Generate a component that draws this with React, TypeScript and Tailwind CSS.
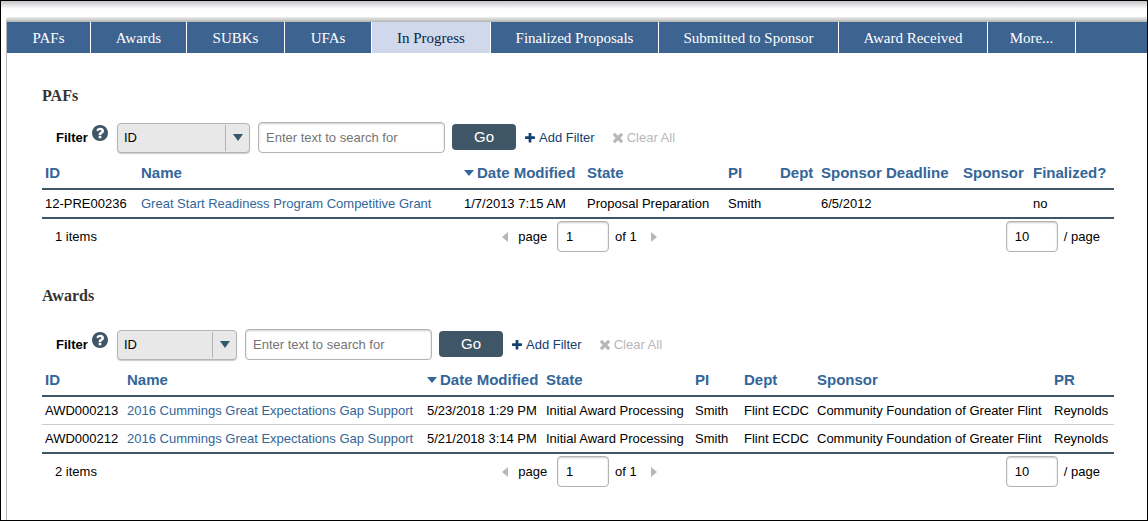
import React from 'react';

const TABS = [
  { label: 'PAFs', width: 'w-[84px]' },
  { label: 'Awards', width: 'w-[96px]' },
  { label: 'SUBKs', width: 'w-[98px]' },
  { label: 'UFAs', width: 'w-[87px]' },
  { label: 'In Progress', width: 'w-[119px]', active: true },
  { label: 'Finalized Proposals', width: 'w-[168px]' },
  { label: 'Submitted to Sponsor', width: 'w-[180px]' },
  { label: 'Award Received', width: 'w-[149px]' },
  { label: 'More...', width: 'w-[88px]' },
];

type Column = { label: string; width: string; sorted?: boolean; link?: boolean };

const PAF_COLUMNS: Column[] = [
  { label: 'ID', width: 'w-[96px]' },
  { label: 'Name', width: 'w-[323px]', link: true },
  { label: 'Date Modified', width: 'w-[123px]', sorted: true },
  { label: 'State', width: 'w-[141px]' },
  { label: 'PI', width: 'w-[52px]' },
  { label: 'Dept', width: 'w-[41px]' },
  { label: 'Sponsor Deadline', width: 'w-[142px]' },
  { label: 'Sponsor', width: 'w-[70px]' },
  { label: 'Finalized?', width: 'w-[84px]' },
];

const PAF_ROWS = [
  [
    '12-PRE00236',
    'Great Start Readiness Program Competitive Grant',
    '1/7/2013 7:15 AM',
    'Proposal Preparation',
    'Smith',
    '',
    '6/5/2012',
    '',
    'no',
  ],
];

const AWARD_COLUMNS: Column[] = [
  { label: 'ID', width: 'w-[82px]' },
  { label: 'Name', width: 'w-[300px]', link: true },
  { label: 'Date Modified', width: 'w-[119px]', sorted: true },
  { label: 'State', width: 'w-[149px]' },
  { label: 'PI', width: 'w-[49px]' },
  { label: 'Dept', width: 'w-[73px]' },
  { label: 'Sponsor', width: 'w-[237px]' },
  { label: 'PR', width: 'w-[63px]' },
];

const AWARD_ROWS = [
  [
    'AWD000213',
    '2016 Cummings Great Expectations Gap Support',
    '5/23/2018 1:29 PM',
    'Initial Award Processing',
    'Smith',
    'Flint ECDC',
    'Community Foundation of Greater Flint',
    'Reynolds',
  ],
  [
    'AWD000212',
    '2016 Cummings Great Expectations Gap Support',
    '5/21/2018 3:14 PM',
    'Initial Award Processing',
    'Smith',
    'Flint ECDC',
    'Community Foundation of Greater Flint',
    'Reynolds',
  ],
];

function QuestionIcon() {
  return (
    <svg viewBox="128 128 1536 1536" className="size-4 fill-[#3f5666]" aria-hidden="true">
      <path d="M1024 1376v-192q0-14-9-23t-23-9h-192q-14 0-23 9t-9 23v192q0 14 9 23t23 9h192q14 0 23-9t9-23zm256-672q0-88-55.5-163t-138.5-116-170-41q-243 0-371 213-15 24 8 42l132 100q7 6 19 6 16 0 25-12 53-68 86-92 34-24 86-24 48 0 85.5 26t37.5 59q0 38-20 61t-68 45q-63 28-115.5 86.5t-52.5 125.5v36q0 14 9 23t23 9h192q14 0 23-9t9-23q0-19 21.5-49.5t54.5-49.5q32-18 49-28.5t46-35 44.5-48 28-60.5 12.5-81zm384 192q0 209-103 385.5t-279.5 279.5-385.5 103-385.5-103-279.5-279.5-103-385.5 103-385.5 279.5-279.5 385.5-103 385.5 103 279.5 279.5 103 385.5z" />
    </svg>
  );
}

function PlusIcon() {
  return (
    <svg viewBox="192 192 1408 1408" className="size-[10px] fill-current" aria-hidden="true">
      <path d="M1600 736v192q0 40-28 68t-68 28h-416v416q0 40-28 68t-68 28h-192q-40 0-68-28t-28-68v-416h-416q-40 0-68-28t-28-68v-192q0-40 28-68t68-28h416v-416q0-40 28-68t68-28h192q40 0 68 28t28 68v416h416q40 0 68 28t28 68z" />
    </svg>
  );
}

function TimesIcon() {
  return (
    <svg viewBox="302 366 1188 1188" className="size-[10px] fill-current" aria-hidden="true">
      <path d="M1490 1322q0 40-28 68l-136 136q-28 28-68 28t-68-28l-294-294-294 294q-28 28-68 28t-68-28l-136-136q-28-28-28-68t28-68l294-294-294-294q-28-28-28-68t28-68l136-136q28-28 68-28t68 28l294 294 294-294q28-28 68-28t68 28l136 136q28 28 28 68t-28 68l-294 294 294 294q28 28 28 68z" />
    </svg>
  );
}

function FilterBar({ id, selectWidth }: { id: string; selectWidth: string }) {
  return (
    <form className="flex h-[31px] items-center pl-[14px]" onSubmit={(e) => e.preventDefault()}>
      <label htmlFor={`${id}-field`} className="w-9 font-bold">
        Filter
      </label>
      <button type="button" aria-label="Filter help" className="mr-[9px] mb-[10px]">
        <QuestionIcon />
      </button>
      <div className={`relative mr-2 ${selectWidth}`}>
        <select
          id={`${id}-field`}
          className="block h-[30px] w-full appearance-none rounded-[4px] border border-[#b4b4b4] bg-[#e8e8e8] pl-[6px] shadow-[0_1px_1px_rgba(0,0,0,0.2)]"
        >
          <option>ID</option>
          <option>Name</option>
          <option>State</option>
        </select>
        <span className="pointer-events-none absolute inset-y-[2px] right-[1px] flex w-6 items-center justify-center border-l border-[#b4b4b4]">
          <svg viewBox="0 0 10 7" className="h-[7px] w-[10px] fill-[#33586c]" aria-hidden="true">
            <path d="M0 0h10L5 7z" />
          </svg>
        </span>
      </div>
      <input
        type="text"
        aria-label="Search text"
        placeholder="Enter text to search for"
        className="h-[31px] w-[187px] rounded-[4px] border border-[#b4b4b4] bg-white px-[7px] shadow-[inset_0_1px_2px_rgba(0,0,0,0.2)] placeholder:text-[#757575]"
      />
      <button type="submit" className="mr-[9px] mb-px ml-[7px] h-[26px] w-16 rounded-[4px] bg-[#3f5666] text-[15px] text-white">
        Go
      </button>
      <button type="button" className="mr-[18px] flex items-center gap-1 text-[#14406f]">
        <PlusIcon />
        Add Filter
      </button>
      <button type="button" disabled className="flex items-center gap-1 text-[#b7b7b7]">
        <TimesIcon />
        Clear All
      </button>
    </form>
  );
}

function DataTable({ columns, rows }: { columns: Column[]; rows: string[][] }) {
  return (
    <table className="w-full table-fixed border-separate border-spacing-0 whitespace-nowrap">
      <thead>
        <tr>
          {columns.map((c) => (
            <th
              key={c.label}
              scope="col"
              className={`h-[33px] border-b-2 border-[#3f5666] p-0 pl-[3px] text-left text-[15px] font-bold text-[#336699] ${c.width}`}
            >
              {c.sorted ? (
                <span className="flex items-center gap-[3px]">
                  <svg viewBox="0 0 10 6" className="h-[6px] w-[10px] fill-current" aria-hidden="true">
                    <path d="M0 0h10L5 6z" />
                  </svg>
                  {c.label}
                </span>
              ) : (
                c.label
              )}
            </th>
          ))}
        </tr>
      </thead>
      <tbody>
        {rows.map((row, r) => (
          <tr key={row[0]}>
            {row.map((cell, i) => (
              <td
                key={columns[i].label}
                className={
                  r === rows.length - 1
                    ? 'h-[29px] border-b-2 border-[#3f5666] p-0 pl-[3px]'
                    : 'h-[28px] border-b border-[#cccccc] p-0 pl-[3px]'
                }
              >
                {columns[i].link ? (
                  <a href="#" className="text-[#336699]">
                    {cell}
                  </a>
                ) : (
                  cell
                )}
              </td>
            ))}
          </tr>
        ))}
      </tbody>
    </table>
  );
}

const PAGE_INPUT =
  'h-[31px] w-[52px] rounded-[4px] border border-[#b4b4b4] bg-white px-2 shadow-[inset_0_1px_2px_rgba(0,0,0,0.2)]';

function Pager({ id, count }: { id: string; count: number }) {
  return (
    <div className="mt-[2px] grid grid-cols-[1fr_auto_1fr] items-center pr-[14px] pl-[13px]">
      <span>{count} items</span>
      <div className="flex items-center pl-1">
        <button type="button" aria-label="Previous page" disabled className="mr-[10px]">
          <svg viewBox="0 0 6 10" className="h-[10px] w-[6px] fill-[#b7b7b7]" aria-hidden="true">
            <path d="M6 0v10L0 5z" />
          </svg>
        </button>
        <label htmlFor={`${id}-page`} className="mr-[10px]">
          page
        </label>
        <input id={`${id}-page`} type="text" defaultValue="1" className={PAGE_INPUT} />
        <span className="ml-[6px]">of 1</span>
        <button type="button" aria-label="Next page" disabled className="ml-[14px]">
          <svg viewBox="0 0 6 10" className="h-[10px] w-[6px] fill-[#b7b7b7]" aria-hidden="true">
            <path d="M0 0v10l6-5z" />
          </svg>
        </button>
      </div>
      <div className="flex items-center gap-[6px] justify-self-end">
        <input id={`${id}-size`} type="text" defaultValue="10" className={PAGE_INPUT} />
        <label htmlFor={`${id}-size`}>/ page</label>
      </div>
    </div>
  );
}

function Title({ children }: { children: React.ReactNode }) {
  return (
    <h2 className="font-['Liberation_Serif','Times_New_Roman',serif] text-[16px] leading-5 font-bold text-[#333333]">
      {children}
    </h2>
  );
}

export default function App() {
  return (
    <div className="flex min-h-screen flex-col border border-black bg-white font-['Liberation_Sans',Arial,sans-serif] text-[13px] leading-4 text-black">
      <div className="h-4 bg-linear-to-b from-[#c4c2c6] to-white to-50%" />
      <div className="ml-[5px] flex flex-1 flex-col">
        <div className="h-[5px] rounded-tl-[3px] bg-linear-to-b from-[#eeeeee] to-[#b2b5b2]" />
        <div className="flex-1 border-l border-[#b8b8b8]">
          <nav className="flex h-[31px] bg-[#3d6391] font-['Liberation_Serif','Times_New_Roman',serif] text-[15px]">
            {TABS.map((t) => (
              <a
                key={t.label}
                href="#"
                aria-current={t.active ? 'page' : undefined}
                className={`flex items-center justify-center border-r border-white whitespace-nowrap ${t.width} ${
                  t.active ? 'bg-[#d0d9eb] text-[#0b2447]' : 'text-white'
                }`}
              >
                {t.label}
              </a>
            ))}
          </nav>
          <main className="flex flex-col gap-[34px] pt-[33px] pr-[33px] pb-8 pl-[35px]">
            <section>
              <Title>PAFs</Title>
              <div className="mt-4 mb-1">
                <FilterBar id="pafs" selectWidth="w-[133px]" />
              </div>
              <DataTable columns={PAF_COLUMNS} rows={PAF_ROWS} />
              <Pager id="pafs" count={1} />
            </section>
            <section>
              <Title>Awards</Title>
              <div className="mt-[23px] mb-1">
                <FilterBar id="awards" selectWidth="w-[120px]" />
              </div>
              <DataTable columns={AWARD_COLUMNS} rows={AWARD_ROWS} />
              <Pager id="awards" count={2} />
            </section>
          </main>
        </div>
      </div>
    </div>
  );
}
